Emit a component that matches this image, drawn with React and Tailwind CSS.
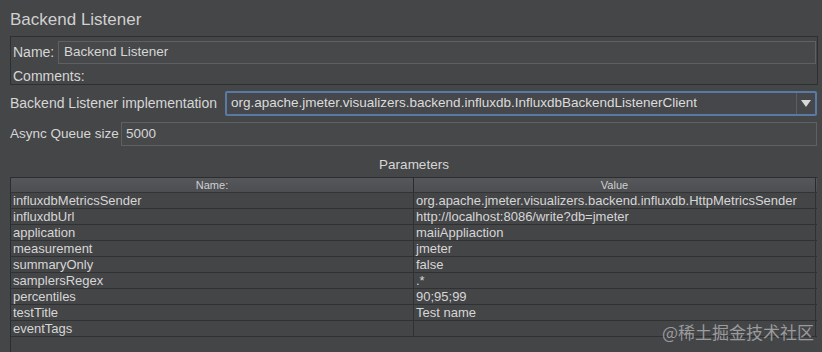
const params = [
  ["influxdbMetricsSender", "org.apache.jmeter.visualizers.backend.influxdb.HttpMetricsSender"],
  ["influxdbUrl", "http://localhost:8086/write?db=jmeter"],
  ["application", "maiiAppliaction"],
  ["measurement", "jmeter"],
  ["summaryOnly", "false"],
  ["samplersRegex", ".*"],
  ["percentiles", "90;95;99"],
  ["testTitle", "Test name"],
  ["eventTags", ""],
];

export default function App() {
  return (
    <div className="w-[822px] h-[352px] overflow-hidden bg-[#454648] text-[#d6d6d6] font-['Liberation_Sans',sans-serif] text-[14px] relative">
      {/* Title */}
      <div className="pl-[10px] pt-[9px] h-[36px] text-[17px] leading-[22px] text-[#d0d0d0]">Backend Listener</div>

      {/* Name / comments panel */}
      <div className="ml-[10px] mr-[4px] h-[49px] border border-[#2e2f31] flex flex-col">
        <div className="flex items-center h-[28px] pt-[3px]">
          <span className="pl-[2px] w-[47px]">Name:</span>
          <div className="flex-1 h-[23px] mr-[1px] bg-[#46484a] border border-[#5e6063] flex items-center pl-[5px] text-[13.5px]">
            Backend Listener
          </div>
        </div>
        <div className="pl-[2px] pt-[4px] leading-[16px]">Comments:</div>
      </div>

      {/* Implementation */}
      <div className="flex items-center ml-[10px] mr-[5px] mt-[6px] h-[25px]">
        <span className="w-[215px] whitespace-nowrap">Backend Listener implementation</span>
        <div className="flex-1 h-[25px] border-2 border-[#5a7aa6] rounded-[2px] bg-[#45474a] flex items-center">
          <span className="flex-1 pl-[4px] text-[#dcdcdc] text-[13.5px] whitespace-nowrap">org.apache.jmeter.visualizers.backend.influxdb.InfluxdbBackendListenerClient</span>
          <div className="w-[19px] h-full border-l border-[#5c5e61] flex items-center justify-center">
            <svg width="10" height="7" viewBox="0 0 10 7"><path d="M0 0H10L5 7Z" fill="#d8d8d8" /></svg>
          </div>
        </div>
      </div>

      {/* Async queue */}
      <div className="flex items-center ml-[10px] mr-[5px] mt-[6px] h-[24px]">
        <span className="w-[111px] whitespace-nowrap text-[13.5px]">Async Queue size</span>
        <div className="flex-1 h-[24px] border border-[#5e6063] bg-[#46484a] flex items-center pl-[4px] text-[13.5px]">5000</div>
      </div>

      {/* Parameters */}
      <div className="text-center mt-[10px] h-[21px] leading-[18px] pl-[6px] text-[13.5px]">Parameters</div>

      <div className="ml-[10px] mr-[5px] border-l border-t border-[#2c2d2f] h-[200px] bg-[#444547] text-[13px]">
        <div className="flex h-[15px] bg-gradient-to-b from-[#55575a] to-[#4c4e51] border-b border-[#333436] text-[11px] leading-[14px] text-[#d0d0d0]">
          <div className="w-[403px] text-center border-r border-[#2a2b2d]">Name:</div>
          <div className="w-[402px] text-center border-r border-[#2a2b2d]">Value</div>
        </div>
        {params.map(([k, v]) => (
          <div key={k} className="flex h-[16px] leading-[15px] border-b border-[#303133]">
            <div className="w-[403px] pl-[2px] border-r border-[#303133] whitespace-nowrap">{k}</div>
            <div className="w-[402px] pl-[2px] border-r border-[#303133] whitespace-nowrap">{v}</div>
          </div>
        ))}
      </div>

      <div className="absolute right-[8px] bottom-[8px] text-[17px] text-[#9a9b9d] font-['Noto_Sans_CJK_SC',sans-serif]">@稀土掘金技术社区</div>
    </div>
  );
}
